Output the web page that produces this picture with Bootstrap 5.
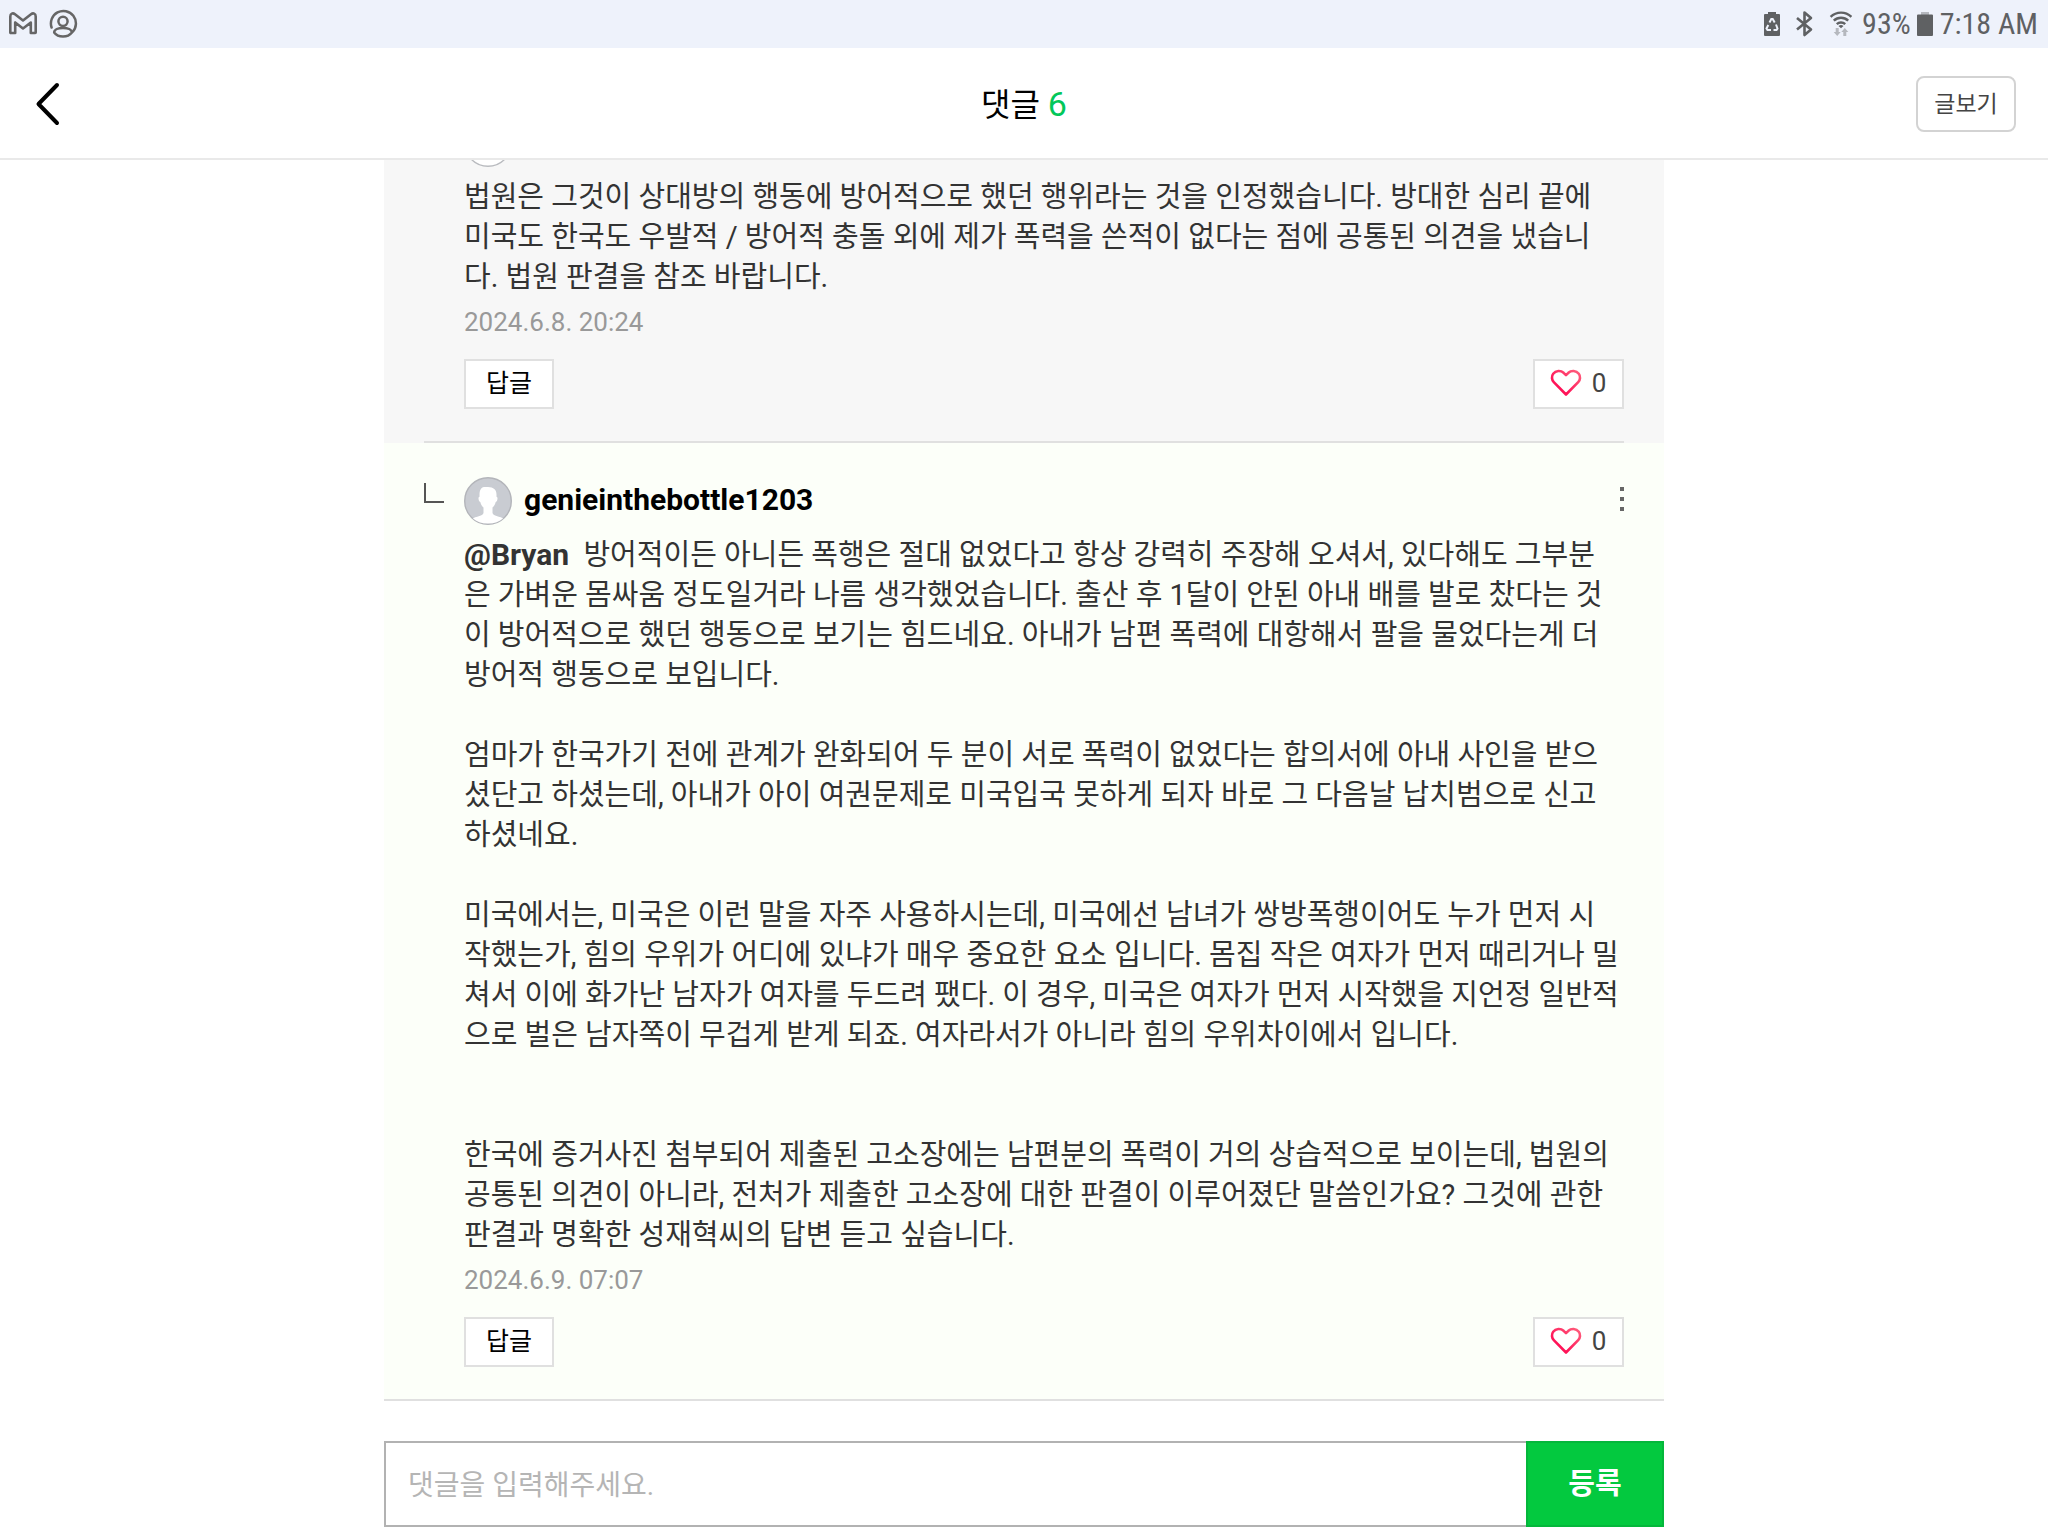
<!DOCTYPE html>
<html lang="ko">
<head>
<meta charset="utf-8">
<meta name="viewport" content="width=device-width, initial-scale=1">
<title>댓글</title>
<link href="https://cdn.jsdelivr.net/npm/bootstrap@5.3.0/dist/css/bootstrap.min.css" rel="stylesheet">
<style>
body{font-family:Roboto,"Noto Sans CJK KR",sans-serif;color:#333;background:#fff}
.status-bar{height:48px;background:#eef2fb;color:#5f6163;padding:0 10px 0 8px;font-family:"Roboto Condensed",Roboto,sans-serif;font-size:30px;line-height:48px}
.status-icons{margin-right:10px}
.charge{margin:0 7px 0 6px}
.top-bar{height:112px;border-bottom:2px solid #e9e9e9;padding:2px 32px 0;background:#fff}
.top-side{flex:1 1 0}
.top-title{font-size:32px;line-height:48px;color:#000;font-weight:400}
.top-title span{color:#03c75a;font-size:34px}
.back-btn{line-height:0}
.view-btn{width:100px;height:56px;border:2px solid #d3d3d3;border-radius:8px;font-size:23px;line-height:32px;color:#444;background:#fff;padding:2px 0 0}
.column{width:100%;max-width:1280px}
.thread{border-bottom:2px solid #e0e0e0}
.comment{padding:0 40px;background:#f7f7f7}
.comment.reply{background:#fcfff9}
.comment-in{padding:34px 0 32px 40px}
.comment.ruled .comment-in{border-bottom:2px solid #e0e0e0}
.corner{left:0;top:40px;width:20px;height:20px;border:solid #555;border-width:0 0 2px 2px}
.avatar{width:48px;height:48px}
.nick{font-size:30px;line-height:46px;font-weight:700;color:#000;margin-left:12px}
.more-btn{line-height:0;margin-top:10px}
.comment-text{font-size:29px;line-height:40px;margin:10px 0 0;white-space:pre-line}
.comment-text b{font-size:30px;line-height:1}
.stamp{font-size:26px;line-height:40px;color:#999;margin:5px 0 17px}
.mini-btn{height:50px;border:2px solid #e0e0e0;background:#fff;border-radius:0;color:#000;font-size:25px;line-height:32px;padding:0}
.mini-btn.answer{width:90px}
.mini-btn.like{width:91px;color:#444;font-size:26px;gap:10px;padding:0 1px 2px 0}
.write{margin:40px 0 9px}
.write-box{height:86px;border:2px solid #b2b2b2;border-right:0;border-radius:0;font-size:28px;padding:2px 22px 0;color:#333}
.write-box::placeholder{color:#b5b5b5;opacity:1}
.send-btn{width:138px;height:86px;border:2px solid #04b73b;border-radius:0;background:#03c93f;color:#fff;font-size:29px;font-weight:700;padding:2px 0 0}
</style>
<script src="https://cdn.jsdelivr.net/npm/bootstrap@5.3.0/dist/js/bootstrap.bundle.min.js"></script>
</head>
<body class="vh-100 overflow-hidden d-flex flex-column">
<svg width="0" height="0" class="position-absolute" aria-hidden="true">
  <defs>
    <linearGradient id="pink" x1="0" y1="1" x2="1" y2="0"><stop offset=".3" stop-color="#ff1458"/><stop offset="1" stop-color="#ff5f7d"/></linearGradient>
    <symbol id="heart" viewBox="0 0 32 28"><path d="M16 25.500 3.800 13.200C1.700 11 1.300 7.200 3.200 4.700 5.800 1.300 10.800 1.200 13.600 3.800L16 6.200l2.400-2.400c2.800-2.600 7.800-2.500 10.400.9 1.900 2.500 1.500 6.300-.6 8.500Z" fill="none" stroke="url(#pink)" stroke-width="2.600" stroke-linejoin="round"/></symbol>
    <symbol id="person" viewBox="0 0 48 48"><circle cx="24" cy="24" r="23.300" fill="#c9ccd2" stroke="#b3b5ba" stroke-width="1.400"/><path d="M24 10c5.500 0 8.500 2.800 8.500 7.500v2.300c1 .3 1.200 1.500.8 2.900-.3 1.300-.9 2.200-1.600 2.400-.6 2.400-1.700 4.300-3.200 5.500v5.200c0 2 2.500 3 5.500 3.700 2.200.5 3.900 1.100 5.100 2C35.500 44.500 30.500 46.500 24 46.500S12.500 44.500 8.900 41.500c1.200-.9 2.900-1.500 5.100-2 3-.7 5.500-1.700 5.500-3.700v-5.200c-1.500-1.200-2.600-3.100-3.200-5.500-.7-.2-1.300-1.100-1.600-2.400-.4-1.400-.2-2.600.8-2.900v-2.300c0-3.500 1.500-7.500 4.500-7.500Z" fill="#fff"/></symbol>
    <symbol id="dots" viewBox="0 0 4 24"><path d="M0 0h4v4H0zM0 10h4v4H0zM0 20h4v4H0z" fill="#666"/></symbol>
  </defs>
</svg>

<div class="status-bar d-flex justify-content-between align-items-center flex-shrink-0">
  <div class="d-flex align-items-center gap-2">
    <svg width="32" height="30" viewBox="0 0 32 30" fill="none" stroke="#666" stroke-width="2.600" stroke-linejoin="round"><path d="M2.300 23.500V7.500C2.300 4.500 4.800 3.600 7 5.300L15 11.500 23 5.300C25.200 3.600 27.700 4.500 27.700 7.500V23.500Q27.700 24 27.200 24H22.800V13.500L15 19.500 7.200 13.500V24H2.800Q2.300 24 2.300 23.500Z"/></svg>
    <svg width="30" height="30" viewBox="0 0 30 30" fill="none" stroke="#666" stroke-width="2.500" stroke-linecap="round"><path d="M3.600 18.500A12.500 12.500 0 1 1 24.500 23"/><circle cx="15" cy="12.300" r="4.600"/><path d="M6.200 23.500c0-2.800 4-4.500 8.800-4.500s8.800 1.700 8.800 4.500c-2 2.800-5 4.100-8.800 4.100s-6.800-1.300-8.800-4.100Z"/></svg>
  </div>
  <div class="d-flex align-items-center">
    <svg width="88" height="28" viewBox="0 0 88 28" class="status-icons flex-shrink-0">
      <path d="M1 4h3V2h8v2h3a1 1 0 0 1 1 1V25a1 1 0 0 1-1 1H1a1 1 0 0 1-1-1V5a1 1 0 0 1 1-1Z" fill="#5f6163"/>
      <g fill="none" stroke="#eef2fb" stroke-width="2"><path d="m5.500 12.500 1.800-3.500h1.400l2 3.500M12 14.500l1.500 4-1 1.500H9.500M7 20H3.500l-1-1.500L4.300 15"/></g>
      <path d="m33 8 14 11.500-6.500 5.500V2.500L47 8 33 19.500" fill="none" stroke="#5f6163" stroke-width="2.600" stroke-linejoin="round"/>
      <g fill="none" stroke="#5f6163" stroke-width="2.400"><path d="M66.600 6.800a15 15 0 0 1 20.800 0M69.800 10.600a10.500 10.500 0 0 1 14.400 0M72.800 14.200a6 6 0 0 1 8.400 0"/></g>
      <path d="m74.500 16 2.500 2.300 2.500-2.300a4 4 0 0 0-5 0Z" fill="#5f6163"/>
      <path d="M71.700 18h3v4h2L73.200 26l-3.500-4h2ZM79.300 26v-4h-2l3.500-4 3.500 4h-2v4Z" fill="#b5b8be"/>
    </svg>
    <span>93%</span>
    <svg class="charge flex-shrink-0" width="16" height="26" viewBox="0 0 16 26"><path d="M4 1h8v3H4z" fill="#b5b8be"/><path d="M1 3.500h14a1 1 0 0 1 1 1V24a1 1 0 0 1-1 1H1a1 1 0 0 1-1-1V4.500a1 1 0 0 1 1-1Z" fill="#5f6163"/></svg>
    <span>7:18 AM</span>
  </div>
</div>

<header class="top-bar d-flex align-items-center flex-shrink-0">
  <div class="top-side"><button type="button" class="btn back-btn p-0 border-0" aria-label="뒤로"><svg width="32" height="48" viewBox="0 0 32 48"><path d="M25 5 6.500 24 25 43" fill="none" stroke="#000" stroke-width="4" stroke-linecap="round" stroke-linejoin="round"/></svg></button></div>
  <h1 class="top-title m-0">댓글 <span>6</span></h1>
  <div class="top-side text-end"><button type="button" class="btn view-btn">글보기</button></div>
</header>

<main class="flex-fill overflow-hidden d-flex flex-column justify-content-end align-items-center">
  <div class="column flex-shrink-0">
    <div class="thread">
      <article class="comment ruled">
        <div class="comment-in">
          <div class="d-flex align-items-center"><svg class="avatar" viewBox="0 0 48 48"><circle cx="24" cy="24" r="23.300" fill="#fff" stroke="#b9bbbf" stroke-width="1.400"/></svg></div>
          <p class="comment-text">법원은 그것이 상대방의 행동에 방어적으로 했던 행위라는 것을 인정했습니다. 방대한 심리 끝에
미국도 한국도 우발적 / 방어적 충돌 외에 제가 폭력을 쓴적이 없다는 점에 공통된 의견을 냈습니
다. 법원 판결을 참조 바랍니다.</p>
          <div class="stamp">2024.6.8. 20:24</div>
          <div class="d-flex justify-content-between">
            <button type="button" class="btn mini-btn answer">답글</button>
            <button type="button" class="btn mini-btn like d-flex align-items-center justify-content-center" aria-label="좋아요"><svg width="32" height="28"><use href="#heart"/></svg>0</button>
          </div>
        </div>
      </article>
      <article class="comment reply">
        <div class="comment-in position-relative">
          <span class="corner position-absolute"></span>
          <div class="d-flex align-items-start">
            <svg class="avatar"><use href="#person"/></svg>
            <strong class="nick">genieinthebottle1203</strong>
            <button type="button" class="btn more-btn p-0 border-0 ms-auto" aria-label="더보기"><svg width="4" height="24"><use href="#dots"/></svg></button>
          </div>
          <p class="comment-text"><b>@Bryan</b>&nbsp; 방어적이든 아니든 폭행은 절대 없었다고 항상 강력히 주장해 오셔서, 있다해도 그부분
은 가벼운 몸싸움 정도일거라 나름 생각했었습니다. 출산 후 1달이 안된 아내 배를 발로 찼다는 것
이 방어적으로 했던 행동으로 보기는 힘드네요. 아내가 남편 폭력에 대항해서 팔을 물었다는게 더
방어적 행동으로 보입니다.

엄마가 한국가기 전에 관계가 완화되어 두 분이 서로 폭력이 없었다는 합의서에 아내 사인을 받으
셨단고 하셨는데, 아내가 아이 여권문제로 미국입국 못하게 되자 바로 그 다음날 납치범으로 신고
하셨네요.

미국에서는, 미국은 이런 말을 자주 사용하시는데, 미국에선 남녀가 쌍방폭행이어도 누가 먼저 시
작했는가, 힘의 우위가 어디에 있냐가 매우 중요한 요소 입니다. 몸집 작은 여자가 먼저 때리거나 밀
쳐서 이에 화가난 남자가 여자를 두드려 팼다. 이 경우, 미국은 여자가 먼저 시작했을 지언정 일반적
으로 벌은 남자쪽이 무겁게 받게 되죠. 여자라서가 아니라 힘의 우위차이에서 입니다.


한국에 증거사진 첨부되어 제출된 고소장에는 남편분의 폭력이 거의 상습적으로 보이는데, 법원의
공통된 의견이 아니라, 전처가 제출한 고소장에 대한 판결이 이루어졌단 말씀인가요? 그것에 관한
판결과 명확한 성재혁씨의 답변 듣고 싶습니다.</p>
          <div class="stamp">2024.6.9. 07:07</div>
          <div class="d-flex justify-content-between">
            <button type="button" class="btn mini-btn answer">답글</button>
            <button type="button" class="btn mini-btn like d-flex align-items-center justify-content-center" aria-label="좋아요"><svg width="32" height="28"><use href="#heart"/></svg>0</button>
          </div>
        </div>
      </article>
    </div>
    <form class="write d-flex">
      <input type="text" class="form-control write-box flex-fill" placeholder="댓글을 입력해주세요." aria-label="댓글">
      <button type="button" class="btn send-btn flex-shrink-0">등록</button>
    </form>
  </div>
</main>
</body>
</html>
